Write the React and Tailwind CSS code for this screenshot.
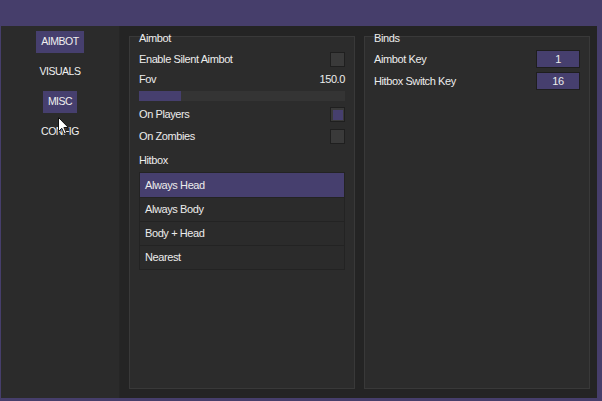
import React from "react";

const font = { fontFamily: '"Liberation Sans", Arial, sans-serif' };

function Checkbox({ checked }) {
  return (
    <div className="w-[15px] h-[15px] bg-[#3a3a3a] border border-[#1f1f1f] flex items-center justify-center">
      {checked && <div className="w-[10px] h-[10px] bg-[#463f6e]" />}
    </div>
  );
}

function NavItem({ label, active }) {
  return (
    <div className="h-[22px] flex items-center justify-center">
      <div
        className={
          "h-[22px] px-[5px] flex items-center text-[10.5px] tracking-[-0.5px] text-[#f0f0f0] " +
          (active ? "bg-[#463f6e]" : "")
        }
      >
        {label}
      </div>
    </div>
  );
}

function Cursor() {
  return (
    <svg
      className="absolute left-[58px] top-[117px]"
      width="12"
      height="18"
      viewBox="0 0 12 18"
    >
      <path
        d="M0.5 0.5 L0.5 14.5 L3.8 11.3 L6.3 16.8 L8.3 15.9 L5.9 10.5 L10.3 10.5 Z"
        fill="#ffffff"
        stroke="#111111"
        strokeWidth="1"
        strokeLinejoin="round"
      />
    </svg>
  );
}

export default function App() {
  const items = ["Always Head", "Always Body", "Body + Head", "Nearest"];
  return (
    <div
      className="w-[602px] h-[401px] bg-[#463e6b] flex flex-col relative overflow-hidden text-[#ececec]"
      style={font}
    >
      <div className="h-[26px] shrink-0" />
      <div className="ml-[1px] mr-[5px] h-[372px] flex">
        {/* Sidebar */}
        <div className="w-[119px] bg-[#2b2b2b] border-r border-[#262626] flex flex-col gap-[8px] pt-[5px]">
          <NavItem label="AIMBOT" active />
          <NavItem label="VISUALS" />
          <NavItem label="MISC" active />
          <NavItem label="CONFIG" />
        </div>
        {/* Main */}
        <div className="flex-1 bg-[#242424] flex gap-[9px] pl-[9px] pr-[7px] pt-[10px] pb-[8px]">
          {/* Aimbot panel */}
          <div className="w-[226px] h-[353px] bg-[#2c2c2c] border border-[#393939] flex flex-col px-[9px] text-[11px] tracking-[-0.4px]">
            <div className="h-[14px] leading-[14px] -mt-[6px]">Aimbot</div>
            <div className="h-[15px] mt-[7px] flex items-center justify-between">
              <span>Enable Silent Aimbot</span>
              <Checkbox />
            </div>
            <div className="h-[14px] mt-[5px] flex items-center justify-between">
              <span>Fov</span>
              <span>150.0</span>
            </div>
            <div className="h-[10px] mt-[5px] bg-[#343434] flex">
              <div className="w-[42px] h-full bg-[#463f6e]" />
            </div>
            <div className="h-[15px] mt-[6px] flex items-center justify-between">
              <span>On Players</span>
              <Checkbox checked />
            </div>
            <div className="h-[15px] mt-[7px] flex items-center justify-between">
              <span>On Zombies</span>
              <Checkbox />
            </div>
            <div className="h-[14px] mt-[9px] flex items-center">Hitbox</div>
            <div className="mt-[5px] border border-[#232323] flex flex-col">
              {items.map((it, i) => (
                <div
                  key={it}
                  className={
                    "h-[24px] flex items-center pl-[5px] " +
                    (i > 0 ? "border-t border-[#232323] " : "") +
                    (i === 0 ? "bg-[#463f6e]" : "bg-[#2b2b2b]")
                  }
                >
                  {it}
                </div>
              ))}
            </div>
          </div>
          {/* Binds panel */}
          <div className="w-[226px] h-[353px] bg-[#2c2c2c] border border-[#393939] flex flex-col px-[9px] text-[11px] tracking-[-0.4px]">
            <div className="h-[14px] leading-[14px] -mt-[6px]">Binds</div>
            <div className="h-[18px] mt-[5px] flex items-center justify-between">
              <span>Aimbot Key</span>
              <div className="w-[44px] h-[18px] bg-[#463f6e] border border-[#1e1e1e] flex items-center justify-center">
                1
              </div>
            </div>
            <div className="h-[18px] mt-[4px] flex items-center justify-between">
              <span>Hitbox Switch Key</span>
              <div className="w-[44px] h-[18px] bg-[#463f6e] border border-[#1e1e1e] flex items-center justify-center">
                16
              </div>
            </div>
          </div>
        </div>
      </div>
      <Cursor />
    </div>
  );
}
